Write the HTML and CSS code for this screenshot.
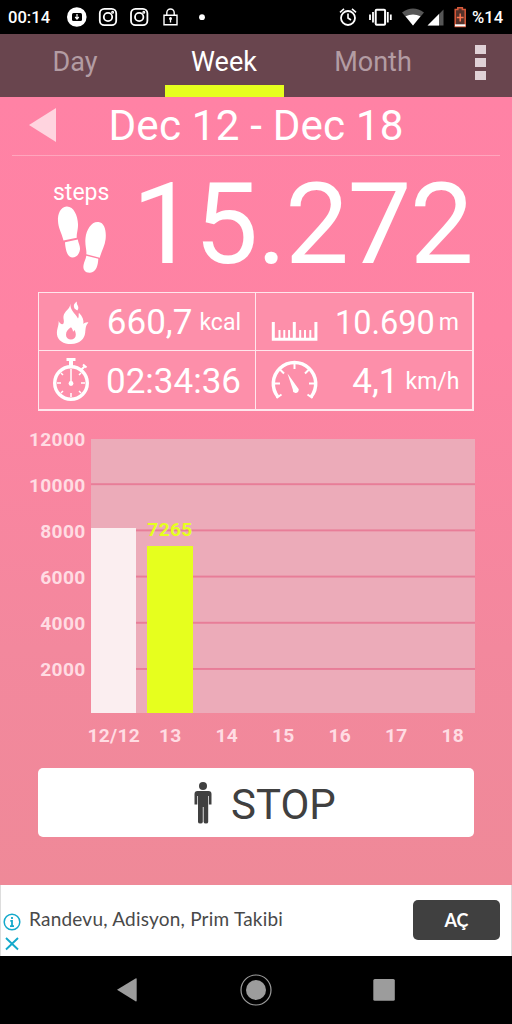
FILE: index.html
```
<!DOCTYPE html>
<html lang="tr">
<head>
<meta charset="utf-8">
<title>Pedometer</title>
<link rel="stylesheet" href="styles.css">
</head>
<body>
<div class="phone">
  <header class="status">
    <span class="clock">00:14</span>
    <svg class="status-left" width="144" height="24" viewBox="66 5 144 24" fill="none" stroke="#fff">
      <circle cx="76.8" cy="17" r="9.8" fill="#fff" stroke="none"/>
      <rect x="72" y="13" width="10" height="8" rx="1.5" fill="#000" stroke="none"/>
      <path d="M77 14v4M75.2 17l1.8 2 1.8-2" stroke-width="1.2"/>
      <g stroke-width="1.8"><rect x="99.8" y="8.8" width="16.4" height="16.4" rx="4.5"/><circle cx="108" cy="17" r="4.2"/><circle cx="112.6" cy="12.2" r=".6"/></g>
      <g stroke-width="1.8"><rect x="131" y="8.8" width="16.4" height="16.4" rx="4.5"/><circle cx="139.2" cy="17" r="4.2"/><circle cx="143.8" cy="12.2" r=".6"/></g>
      <path d="M164 15.3h13v9.4h-13zM166.8 15v-2.3a3.7 3.7 0 0 1 7.4 0V15" stroke-width="1.4"/>
      <circle cx="170.5" cy="18.6" r="1.5" fill="#fff" stroke="none"/><path d="M170.5 19v3.5" stroke-width="1.3"/>
      <circle cx="202" cy="17.2" r="2.9" fill="#fff" stroke="none"/>
    </svg>
    <svg class="status-right" width="132" height="24" viewBox="338 5 132 24" fill="none" stroke="#fff">
      <circle cx="348" cy="18" r="7" stroke-width="1.8"/><path d="M348 13.5V18l3 2M340 12.3l4-3.4M356 12.3l-4-3.4" stroke-width="1.6"/>
      <rect x="375.7" y="9.8" width="9.4" height="15" rx="1" stroke-width="2"/><path d="M373 12v10.5M370 14.5v5.5M387.8 12v10.5M390.8 14.5v5.5" stroke-width="1.8"/>
      <path d="M402 12.5q11-8 22 0L413 25.5z" fill="#565656" stroke="none"/><path d="M405.5 16.3q7.5-3.500 15 0L413 25.5z" fill="#fff" stroke="none"/>
      <path d="M443.5 9.5v16H428z" fill="#565656" stroke="none"/><path d="M439 14v11.5H427.500z" fill="#fff" stroke="none"/>
      <path d="M455.2 9.5h2.600V7.800h4.600v1.700h2.800v17h-10z" fill="#53312a" stroke="#d8593a" stroke-width="1.5"/><path d="M460.200 13.500v8M456.800 17.500h6.800" stroke="#ff7650" stroke-width="1.5"/><path d="M455 25.300h10.400" stroke-width="2"/>
    </svg>
    <span class="charge">%14</span>
  </header>
  <nav class="tabs">
    <span class="tab">Day</span>
    <span class="tab active">Week</span>
    <span class="tab">Month</span>
    <span class="more"><i></i><i></i><i></i></span>
  </nav>
  <main class="app">
    <section class="range">
      <svg class="prev" width="28" height="36" viewBox="0 0 28 36"><path d="M0 18 27 1v34z" fill="#ffd4df"/></svg>
      <h1 class="dates">Dec 12 - Dec 18</h1>
    </section>
    <section class="total">
      <div class="steps">
        <span class="steps-label">steps</span>
        <svg class="feet" width="50" height="68" viewBox="57 205 50 68" fill="#fff">
          <path d="M66.500 206.500C60.500 207 57.500 214 58 221c.3 7 3.500 11.500 5.500 19.500l13.300-2.700c-.4-4.500 1.400-8 1.200-13.800-.3-8.500-4.500-18-11.500-17.500z"/>
          <path d="M65 242.200l12.800-2.700c.4 3.500 2.500 6 2.200 9.800-.4 4.700-3.500 8.200-7.500 8.200-5.800 0-7.200-10-7.500-15.300z"/>
          <path d="M98.500 222c-7-.8-12 7.500-13 16-.8 7.500 1.400 11.500.8 16.300l13.500 3.400c1.700-7 5-11.500 5.800-18.500.9-8.500-1-16.500-7.100-17.200z"/>
          <path d="M86.300 255.800l12 3c-.2 6-2 13.700-8.300 14-5 .2-7.200-3.300-6.500-7.500.5-3.500 2.300-5.800 2.800-9.500z"/>
        </svg>
      </div>
      <strong class="count">15.272</strong>
    </section>
    <section class="stats">
      <div class="stat">
        <svg class="flame" width="46" height="46" viewBox="48 299 46 46">
          <path d="M70.500 303.500c-.5 6-6 7.300-7 12.500-.5 3 1 4.700.1 7.200-1 2.200-3.800.5-5-2.200.4 5-2.200 8.200-1.600 13.400.7 6 6.500 9.600 14 9.600 9 0 13.500-5.200 14.200-11.200.5-4 .3-7.300 3.200-10.300-1.800-.8-3.800.2-5 1.500.4-4-.7-7.800-4.500-11.300-.6 2.200.3 4.200-.9 5.700-2.900-5.200-8.200-8-7.500-14.900z" fill="#fff"/>
          <path d="M71 327.300c-3 2-5 4-5 7.400a4.900 4.900 0 0 0 9.800 0c0-2.300-.8-3.200-1-4.700l-1.800 1.700c-.2-2-.8-3-2-4.400z" fill="#fd8eaa"/>
          <path d="M77 301.500c-3.500 2.200-3.700 4.300-2.300 7.300l2.600 1.800c1.400-1.700 1.300-3.400.4-5-.8-1.600-1.200-2.500-.7-4.100z" fill="#fff"/>
        </svg>
        <span class="value v-kcal">660,7</span><span class="unit">kcal</span>
      </div>
      <div class="stat">
        <svg class="ruler" width="50" height="46" viewBox="270 299 50 46" fill="none" stroke="#fff"><path d="M273.300 322v17.200h42.600V322M294.300 322v17" stroke-width="3"/><path d="M279.500 330v9M284.300 330v9M289.100 330v9M300.200 330v9M305 330v9M310.300 330v9" stroke-width="2"/></svg>
        <span class="value v-dist">10.690</span><span class="unit u-m">m</span>
      </div>
      <div class="stat">
        <svg class="watch" width="46" height="46" viewBox="48 359 46 46" fill="none" stroke="#fff"><circle cx="71" cy="385" r="16.3" stroke-width="3.4"/><path d="M66.500 361.500h9" stroke-width="3"/><path d="M71 362v7" stroke-width="4"/><path d="M81.500 371.500l4-4M83 366.500l3.500 3" stroke-width="2"/><path d="M71 371v14M71 395v4M57 385h4M81 385h4M61 375l2 2M81 375l-2 2M61 395l2-2M81 395l-2-2" stroke-width="1.5"/><circle cx="71" cy="385.5" r="2.4" fill="#fff" stroke="none"/></svg>
        <span class="value v-time">02:34:36</span>
      </div>
      <div class="stat">
        <svg class="gauge" width="50" height="46" viewBox="270 359 50 46" fill="none" stroke="#fff"><path d="M278 399a21.200 21.200 0 1 1 33 0" stroke-width="3.5"/><path d="M294.500 365v6M274 385.500h6M309 385.500h6M280 371.500l4 4M309 371.500l-4 4M276.500 400l5-3.500M312.500 400l-5-3.500" stroke-width="2"/><path d="M287.500 375.500l10 14a3 3 0 1 1-4.700 2z" fill="#fff" stroke="none"/></svg>
        <span class="value v-speed">4,1</span><span class="unit u-speed">km/h</span>
      </div>
    </section>
    <section class="chart">
      <div class="y-axis"><span>12000</span><span>10000</span><span>8000</span><span>6000</span><span>4000</span><span>2000</span></div>
      <div class="plot">
        <div class="bar past"></div>
        <div class="bar today"><span class="bar-label">7265</span></div>
      </div>
      <div class="x-axis"><span>12/12</span><span>13</span><span>14</span><span>15</span><span>16</span><span>17</span><span>18</span></div>
    </section>
    <button class="stop">
      <svg width="18" height="42" viewBox="0 0 18 42" fill="#404040"><circle cx="9" cy="4" r="4"/><path d="M3.500 9h11q3 0 3 3v10.500h-2.600V14h-.7v26q0 1.500-2.200 1.500T9.600 40V25h-.8v15q0 1.500-2.400 1.500T4 40V14h-.7v8.500H.5V12q0-3 3-3z"/></svg>
      <span class="stop-label">STOP</span>
    </button>
  </main>
  <aside class="ad">
    <svg class="ad-info" width="18" height="40" viewBox="3 912 18 40" fill="none" stroke="#13a9cb"><circle cx="12" cy="922" r="7.8" stroke-width="1.5"/><path d="M12 917v2M10.300 920.800H12v5.500M10 926.200h4" stroke-width="1.8"/><path d="M6 938l12 11.500M18 938L6 949.500" stroke-width="1.9"/></svg>
    <span class="ad-text">Randevu, Adisyon, Prim Takibi</span>
    <span class="ad-open">AÇ</span>
  </aside>
  <footer class="navbar">
    <svg width="280" height="34" viewBox="116 973 280 34" fill="#9c9c9c"><path d="M117 989.700l18.500-11.300q1.200-.6 1.200.6v21.600q0 1.200-1.200.6z"/><circle cx="256" cy="990" r="10"/><circle cx="256" cy="990" r="15" fill="none" stroke="#9c9c9c" stroke-width="1.2"/><rect x="373.3" y="979" width="21.5" height="21.8" rx="1.5"/></svg>
  </footer>
</div>
</body>
</html>
```

FILE: styles.css
```
* { box-sizing: border-box; }
body { margin: 0; background: #000; font-family: Roboto, "Liberation Sans", sans-serif; }
.phone { width: 512px; height: 1024px; display: flex; flex-direction: column; overflow: hidden; }
svg { display: block; flex: none; }

.status { height: 34px; flex: none; display: flex; align-items: center; background: #000; color: #fff; font-size: 16.6px; font-weight: 500; line-height: 34px; white-space: nowrap; padding: 0 8px; }
.clock { width: 58px; padding-top: 1px; }
.status-right { margin-left: 128px; }
.charge { margin-left: 2px; padding-top: 1px; }

.tabs { height: 62.5px; flex: none; display: grid; grid-template-columns: 149px 149px 149px 65px; background: #69454e; color: #b39ca3; font-size: 27px; line-height: 56px; text-align: center; }
.tab { display: flex; flex-direction: column; align-items: center; padding-left: 1px; }
.active { color: #fff; }
.active::after { content: ""; width: 119px; height: 12px; margin-top: -5px; background: #e6ff1e; }
.more { display: flex; flex-direction: column; gap: 3.5px; padding: 10.5px 0 0 27.5px; }
.more i { width: 11px; height: 9.5px; background: #dfd1d6; }

.app { height: 788px; flex: none; background: linear-gradient(#ff82a5, #fe83a3 30%, #f3889d 70%, #ef8998); padding: 0 38px; color: #fff; }
.range { height: 59.5px; margin: 0 -26px; padding: 0 17px; display: flex; border-bottom: 1.5px solid #ffa5bd; }
.prev { margin-top: 10px; }
.dates { margin: 0 0 0 51.5px; font-size: 42.2px; font-weight: 400; line-height: 57.5px; letter-spacing: .17px; white-space: nowrap; }

.total { height: 136px; display: flex; }
.steps { width: 94px; display: flex; flex-direction: column; padding-left: 15px; }
.steps-label { font-size: 23px; line-height: 28px; padding-top: 23px; }
.feet { margin: -2px 0 0 4px; }
.count { font-size: 114px; font-weight: 400; line-height: 136px; letter-spacing: -1.7px; }

.stats { height: 119px; display: grid; grid-template-columns: 216px 216px; grid-template-rows: 57px 58px; gap: 1px; border: 1.5px solid #ffe6ec; background: #ffe6ec; width: 436px; }
.stat { background: #fd8faa; display: flex; padding-left: 8.5px; line-height: 59px; white-space: nowrap; }
.stat svg { margin-top: 6px; }
.stat:nth-child(n+3) { line-height: 61px; }
.stat:nth-child(even) { padding-left: 13.5px; }
.value { font-size: 35px; margin-left: auto; }
.unit { font-size: 23px; margin: 0 14px 0 7px; }
.v-time { margin-right: 14px; }
.v-dist { font-size: 32.5px; line-height: 60px; }
.u-m { margin: 0 13px 0 4px; }
.u-speed { margin-right: 12.5px; }

.chart { height: 322px; padding-top: 27.5px; margin: 0 -1px 0 -18px; display: grid; grid-template-columns: 71px 384px; grid-template-rows: 274.5px 45px; font-size: 19.2px; font-weight: 700; letter-spacing: .3px; color: #ffdce3; }
.y-axis { display: flex; flex-direction: column; text-align: right; padding-right: 5.5px; margin-top: -22px; }
.y-axis span { height: 46.2px; line-height: 46px; }
.plot { background-color: #ecabb9; background-image: linear-gradient(transparent 43.8px, #e87d98 43.8px); background-size: 100% 46.2px; display: flex; align-items: flex-end; gap: 11px; }
.bar { width: 45.3px; }
.past { height: 185px; background: #fbeef0; }
.today { height: 167.5px; background: #e6ff1e; color: #e6ff1e; text-align: center; }
.bar-label { display: block; margin-top: -28px; line-height: 24px; }
.x-axis { grid-column: 2; display: grid; grid-template-columns: repeat(7, 56.5px); margin-left: -5.5px; text-align: center; line-height: 45.5px; }

.stop { width: 436px; height: 69.5px; margin: 34.5px 0 0; padding: 0 0 0 156px; border: 0; border-radius: 5px; background: #fff; color: #404040; display: flex; align-items: center; gap: 19px; font: 42px/70px Roboto, "Liberation Sans", sans-serif; }
.stop svg { margin-top: 1px; }
.stop-label { padding-top: 5px; }

.ad { height: 71px; flex: none; background: #fff; display: flex; align-items: center; border-left: 1px solid #ddd; border-right: 1px solid #ddd; color: #494949; font-family: Lato, Roboto, sans-serif; font-size: 19px; white-space: nowrap; }
.ad-info { margin: 23px 0 0 2px; }
.ad-text { margin: -3px 0 0 8px; letter-spacing: .22px; }
.ad-open { margin: 0 11px 0 auto; width: 87px; height: 40.5px; border-radius: 5px; background: #404040; color: #fff; text-align: center; line-height: 40px; font-size: 18px; font-weight: 700; }
.navbar { flex: 1; background: #000; padding: 17.5px 0 0 116px; }
```
